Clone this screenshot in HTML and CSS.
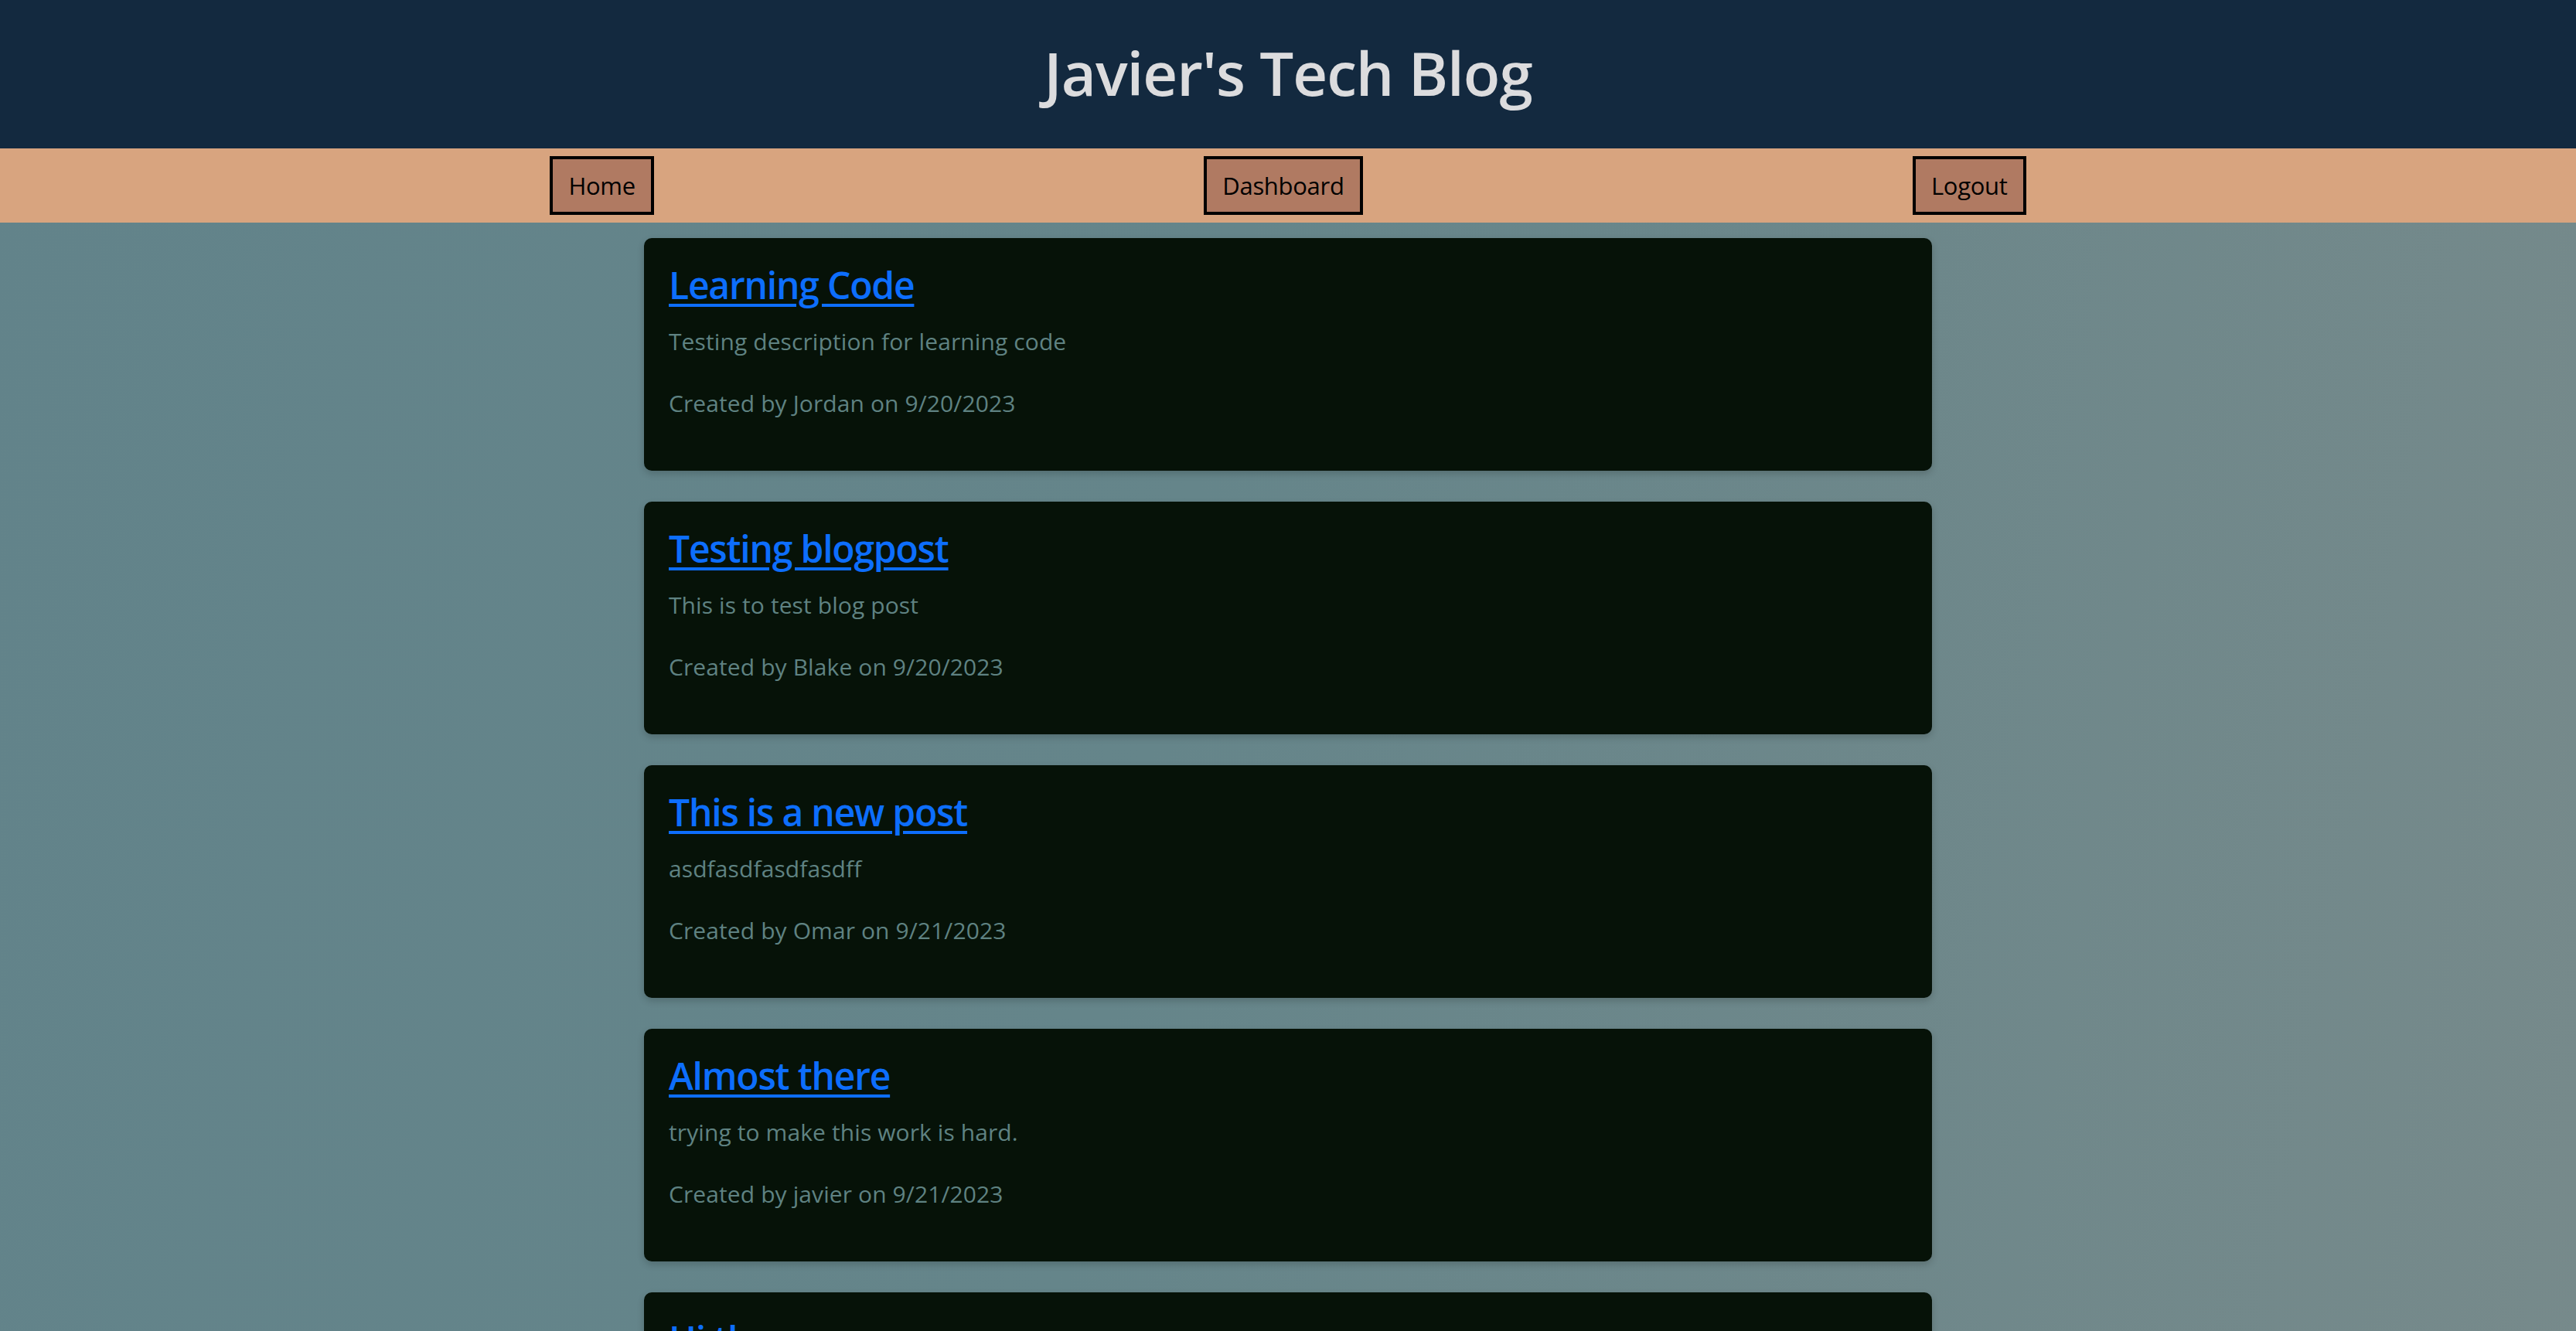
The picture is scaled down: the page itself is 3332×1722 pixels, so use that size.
FILE: index.html
```html
<!DOCTYPE html>
<html lang="en">
<head>
<meta charset="utf-8">
<title>Javier's Tech Blog</title>
<link rel="stylesheet" href="styles.css">
</head>
<body>
<header class="site-header">
  <h1 class="site-title">Javier's Tech Blog</h1>
</header>
<nav class="site-nav">
  <a class="nav-btn" href="#">Home</a>
  <a class="nav-btn" href="#">Dashboard</a>
  <a class="nav-btn" href="#">Logout</a>
</nav>
<main class="posts">
  <article class="post-card">
    <h2 class="post-title"><a href="#">Learning Code</a></h2>
    <p class="post-text">Testing description for learning code</p>
    <p class="post-text">Created by Jordan on 9/20/2023</p>
  </article>
  <article class="post-card">
    <h2 class="post-title"><a href="#">Testing blogpost</a></h2>
    <p class="post-text">This is to test blog post</p>
    <p class="post-text">Created by Blake on 9/20/2023</p>
  </article>
  <article class="post-card">
    <h2 class="post-title"><a href="#">This is a new post</a></h2>
    <p class="post-text">asdfasdfasdfasdff</p>
    <p class="post-text">Created by Omar on 9/21/2023</p>
  </article>
  <article class="post-card">
    <h2 class="post-title"><a href="#">Almost there</a></h2>
    <p class="post-text">trying to make this work is hard.</p>
    <p class="post-text">Created by javier on 9/21/2023</p>
  </article>
  <article class="post-card">
    <h2 class="post-title"><a href="#">Hi there</a></h2>
    <p class="post-text">Another post</p>
    <p class="post-text">Created by javier on 9/21/2023</p>
  </article>
</main>
</body>
</html>
```

FILE: styles.css
```css
html, body {
  margin: 0;
  padding: 0;
}

body {
  font-family: "Open Sans", "Noto Sans", sans-serif;
  background: linear-gradient(100deg, #62838a 0%, #65858a 45%, #778a8b 100%);
  min-height: 100vh;
}

.site-header {
  background: #13293f;
  height: 192px;
  display: flex;
  align-items: center;
  justify-content: center;
}

.site-title {
  margin: 0;
  color: #dcdcde;
  font-size: 78px;
  font-weight: 600;
  line-height: 1;
  letter-spacing: -1px;
  padding-bottom: 4px;
}

.site-nav {
  background: #d8a47f;
  display: flex;
  justify-content: space-evenly;
  padding: 10px 0;
}

.nav-btn {
  display: block;
  background: #b07a62;
  border: 4px solid #000;
  color: #000;
  text-decoration: none;
  font-size: 31px;
  line-height: 48px;
  padding: 10px 20px;
  letter-spacing: -0.3px;
}

.posts {
  display: flex;
  flex-direction: column;
  align-items: center;
  gap: 40px;
  padding: 20px 0 40px;
}

.post-card {
  width: 50%;
  box-sizing: border-box;
  background: #061208;
  border-radius: 10px;
  padding: 30px 32px;
  box-shadow: 0 4px 10px rgba(0, 0, 0, 0.18);
}

.post-title {
  margin: 0 0 20px;
  font-size: 48px;
  font-weight: 600;
  line-height: 61px;
  letter-spacing: -1.2px;
}

.post-title a {
  color: #0d6efd;
  text-decoration: underline;
  text-decoration-thickness: 4px;
  text-underline-offset: 6px;
}

.post-text {
  margin: 0 0 35px;
  color: #5f8282;
  font-size: 30px;
  line-height: 45px;
  letter-spacing: 0.1px;
}
```
